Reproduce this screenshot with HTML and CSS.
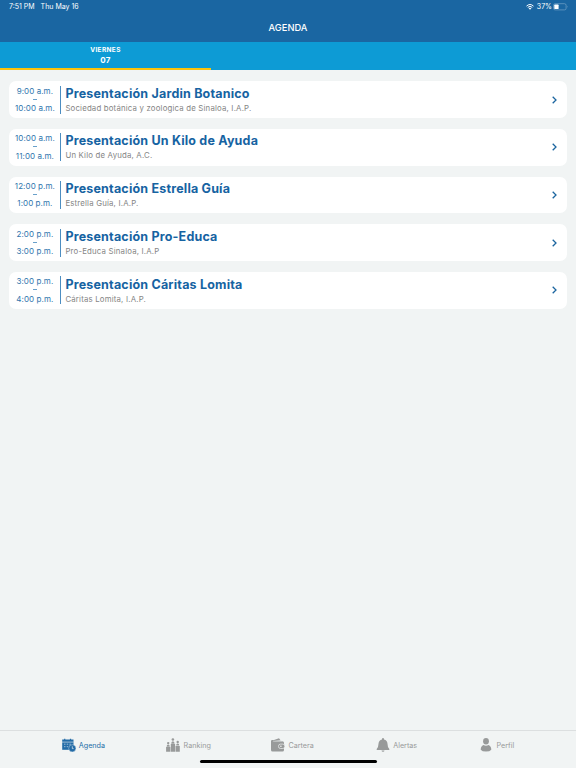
FILE: index.html
```html
<!DOCTYPE html>
<html lang="es">
<head>
<meta charset="utf-8">
<title>Agenda</title>
<link rel="stylesheet" href="styles.css">
</head>
<body>
<header class="header">
  <div class="status">
    <span class="clock">7:51 PM</span><span class="date">Thu May 16</span>
    <svg class="wifi" viewBox="0 0 16 12"><path d="M1 4.2Q8-2.2 15 4.2M3.5 6.7Q8 2.7 12.5 6.7" fill="none" stroke="#fff" stroke-width="2"/><path d="M5.2 8.5Q8 6.2 10.800 8.500L8 11.500Z" fill="#fff"/></svg>
    <span class="percent">37%</span>
    <svg class="battery" viewBox="0 0 15 8"><rect x=".5" y=".7" width="12.600" height="6.200" rx="1.600" fill="none" stroke="#76a3c9" stroke-width=".7"/><rect x="1.300" y="1.500" width="4.300" height="4.600" rx=".7" fill="#fff"/><path d="M14 2.800q1 .9 0 2z" fill="#76a3c9"/></svg>
  </div>
  <h1 class="title">AGENDA</h1>
</header>
<nav class="days">
  <div class="day"><span class="weekday">VIERNES</span><span class="number">07</span></div>
</nav>
<main class="list">
  <article class="card">
    <div class="time"><span>9:00 a.m.</span><i></i><span>10:00 a.m.</span></div>
    <div class="info"><h2>Presentación Jardin Botanico</h2><p>Sociedad botánica y zoologica de Sinaloa, I.A.P.</p></div>
    <svg class="chevron" viewBox="0 0 5 8"><path d="M.7.700 4 4 .7 7.300"/></svg>
  </article>
  <article class="card">
    <div class="time"><span>10:00 a.m.</span><i></i><span>11:00 a.m.</span></div>
    <div class="info"><h2>Presentación Un Kilo de Ayuda</h2><p>Un Kilo de Ayuda, A.C.</p></div>
    <svg class="chevron" viewBox="0 0 5 8"><path d="M.7.700 4 4 .7 7.300"/></svg>
  </article>
  <article class="card">
    <div class="time"><span>12:00 p.m.</span><i></i><span>1:00 p.m.</span></div>
    <div class="info"><h2>Presentación Estrella Guía</h2><p>Estrella Guía, I.A.P.</p></div>
    <svg class="chevron" viewBox="0 0 5 8"><path d="M.7.700 4 4 .7 7.300"/></svg>
  </article>
  <article class="card">
    <div class="time"><span>2:00 p.m.</span><i></i><span>3:00 p.m.</span></div>
    <div class="info"><h2>Presentación Pro-Educa</h2><p>Pro-Educa Sinaloa, I.A.P</p></div>
    <svg class="chevron" viewBox="0 0 5 8"><path d="M.7.700 4 4 .7 7.300"/></svg>
  </article>
  <article class="card">
    <div class="time"><span>3:00 p.m.</span><i></i><span>4:00 p.m.</span></div>
    <div class="info"><h2>Presentación Cáritas Lomita</h2><p>Cáritas Lomita, I.A.P.</p></div>
    <svg class="chevron" viewBox="0 0 5 8"><path d="M.7.700 4 4 .7 7.300"/></svg>
  </article>
</main>
<footer class="tabs">
  <a class="tab active">
    <svg viewBox="0 0 14 14"><path d="M.2 1.500h11.300v10.300H.2z" fill="currentColor"/><path d="M0 4.100h11.500" stroke="#f1f4f4" stroke-width=".6"/><path d="M2.700.800v2M8.500.800v2" stroke="currentColor" stroke-width="1.200"/><path d="M2 6.200h1.500m1.200 0h1.500m1.200 0h1.500M2 8.700h1.500m1.200 0h1.500" stroke="#a9c5da" stroke-width=".9"/><circle cx="10.300" cy="10.300" r="3.600" fill="currentColor" stroke="#f1f4f4" stroke-width=".4"/><path d="M10.300 8.300v2.300h1.300" fill="none" stroke="#f1f4f4" stroke-width=".7"/></svg>
    <span>Agenda</span>
  </a>
  <a class="tab">
    <svg viewBox="0 0 14 14"><path d="M.1 9h4.200v4.700H.1zM4.800 6h4.300v7.700H4.800zM9.600 8h4.200v5.700H9.600z" fill="currentColor"/><circle cx="6.900" cy="1.500" r="1.300" fill="currentColor"/><path d="M5.200 5.700q0-2.500 1.700-2.500t1.700 2.500zM.6 8.700q0-2.200 1.600-2.200t1.600 2.200zM10.100 7.600q0-2.200 1.600-2.200t1.600 2.200z" fill="currentColor"/><circle cx="2.200" cy="5.100" r="1.200" fill="currentColor"/><circle cx="11.700" cy="4" r="1.200" fill="currentColor"/></svg>
    <span>Ranking</span>
  </a>
  <a class="tab">
    <svg viewBox="0 0 14 14"><path d="M1.200 3.200h10.200q1.600 0 1.600 1.500v7.200q0 1.600-1.600 1.600H1.600Q0 13.500 0 11.900V3q0-.9 1.200-.9h1.800L8 .3l1.500 1.900H11" fill="currentColor"/><path d="M2 3.100h9.500" fill="none" stroke="#f1f4f4" stroke-width=".4"/><rect x="7.500" y="6.100" width="6.300" height="4.400" rx="2" fill="currentColor" stroke="#f1f4f4" stroke-width=".7"/><circle cx="9.900" cy="8.300" r=".8" fill="#f1f4f4"/></svg>
    <span>Cartera</span>
  </a>
  <a class="tab">
    <svg viewBox="0 0 14 14"><path d="M6 1a1 1 0 0 1 2 0v.5q3.300.8 3.500 4.300.1 4 1.800 5.100v1H.7v-1Q2.400 9.800 2.500 5.800 2.700 2.300 6 1.500zM5.500 12.500h3q-.1 1.300-1.500 1.300t-1.500-1.300z" fill="currentColor"/></svg>
    <span>Alertas</span>
  </a>
  <a class="tab profile">
    <svg viewBox="0 0 14 14"><ellipse cx="7" cy="3.300" rx="2.900" ry="3.200" fill="currentColor"/><path d="M1.700 11.700q.1-3.700 2.700-4.700 2.600 1.300 5.200 0 2.600 1 2.700 4.700Q10.800 13.600 7 13.600t-5.300-1.900z" fill="currentColor"/></svg>
    <span>Perfil</span>
  </a>
  <div class="home"></div>
</footer>
</body>
</html>
```
FILE: styles.css
```css
* { box-sizing: border-box; }
body {
  margin: 0;
  height: 768px;
  display: flex;
  flex-direction: column;
  overflow: hidden;
  background: #f1f4f4;
  font-family: Inter, "Liberation Sans", sans-serif;
}
.header { height: 42px; background: #1a66a2; color: #fff; }
.status {
  display: flex;
  align-items: center;
  height: 14px;
  padding: 0 8px 0 9px;
  font-size: 7px;
  line-height: 14px;
}
.date { margin-left: 6px; }
.wifi { width: 8px; height: 6px; margin-left: auto; }
.percent { margin: 0 1px 0 3px; }
.battery { width: 15px; height: 8px; }
.title {
  margin: 6px 0 0;
  font-size: 9.3px;
  line-height: 16px;
  font-weight: 500;
  text-align: center;
}
.days { height: 28px; background: #0d9bd5; }
.day {
  display: flex;
  flex-direction: column;
  align-items: center;
  width: 211px;
  height: 28px;
  padding-top: 3px;
  border-bottom: 2px solid #fcc30b;
  color: #fff;
  font-weight: 700;
}
.weekday { font-size: 6.5px; line-height: 10px; letter-spacing: .35px; }
.number { font-size: 8px; line-height: 10px; letter-spacing: .2px; }
.list {
  flex: 1;
  display: flex;
  flex-direction: column;
  gap: 11px;
  padding: 11.2px 9.4px 0;
}
.card {
  display: flex;
  align-items: center;
  height: 36.7px;
  padding-right: 10px;
  border-radius: 7px;
  background: #fff;
}
.time {
  display: flex;
  flex-direction: column;
  align-items: center;
  width: 52px;
  height: 28px;
  border-right: 1px solid #4c8dc1;
  color: #2f75ad;
  font-size: 8px;
  line-height: 10px;
  letter-spacing: .08px;
}
.time i { width: 4px; height: 1px; margin: 3.2px 0; background: #69a0ca; }
.info { flex: 1; padding-left: 4px; }
.info h2 {
  margin: .5px 0 0;
  color: #1663a2;
  font-size: 12.5px;
  line-height: 16px;
  font-weight: 700;
  letter-spacing: .19px;
}
.info p {
  margin: 0;
  color: #858585;
  font-size: 7.8px;
  line-height: 12px;
  letter-spacing: .19px;
}
.chevron { width: 5px; height: 8px; fill: none; stroke: #1b659f; stroke-width: 1.3; }
.tabs {
  position: relative;
  display: flex;
  height: 38px;
  padding-left: 61.5px;
  border-top: 1px solid #dcdfe0;
}
.tab {
  display: flex;
  flex: none;
  width: 104.8px;
  height: 28px;
  align-items: center;
  gap: 3.3px;
  color: #989a9a;
  font-size: 7.2px;
}
.tab.active { color: #246ca7; }
.tab.profile { width: auto; margin-left: -1.5px; }
.tab svg { width: 14px; height: 14px; }
.home {
  position: absolute;
  left: 199.500px;
  bottom: 5px;
  width: 177px;
  height: 3px;
  border-radius: 2px;
  background: #000;
}
```
